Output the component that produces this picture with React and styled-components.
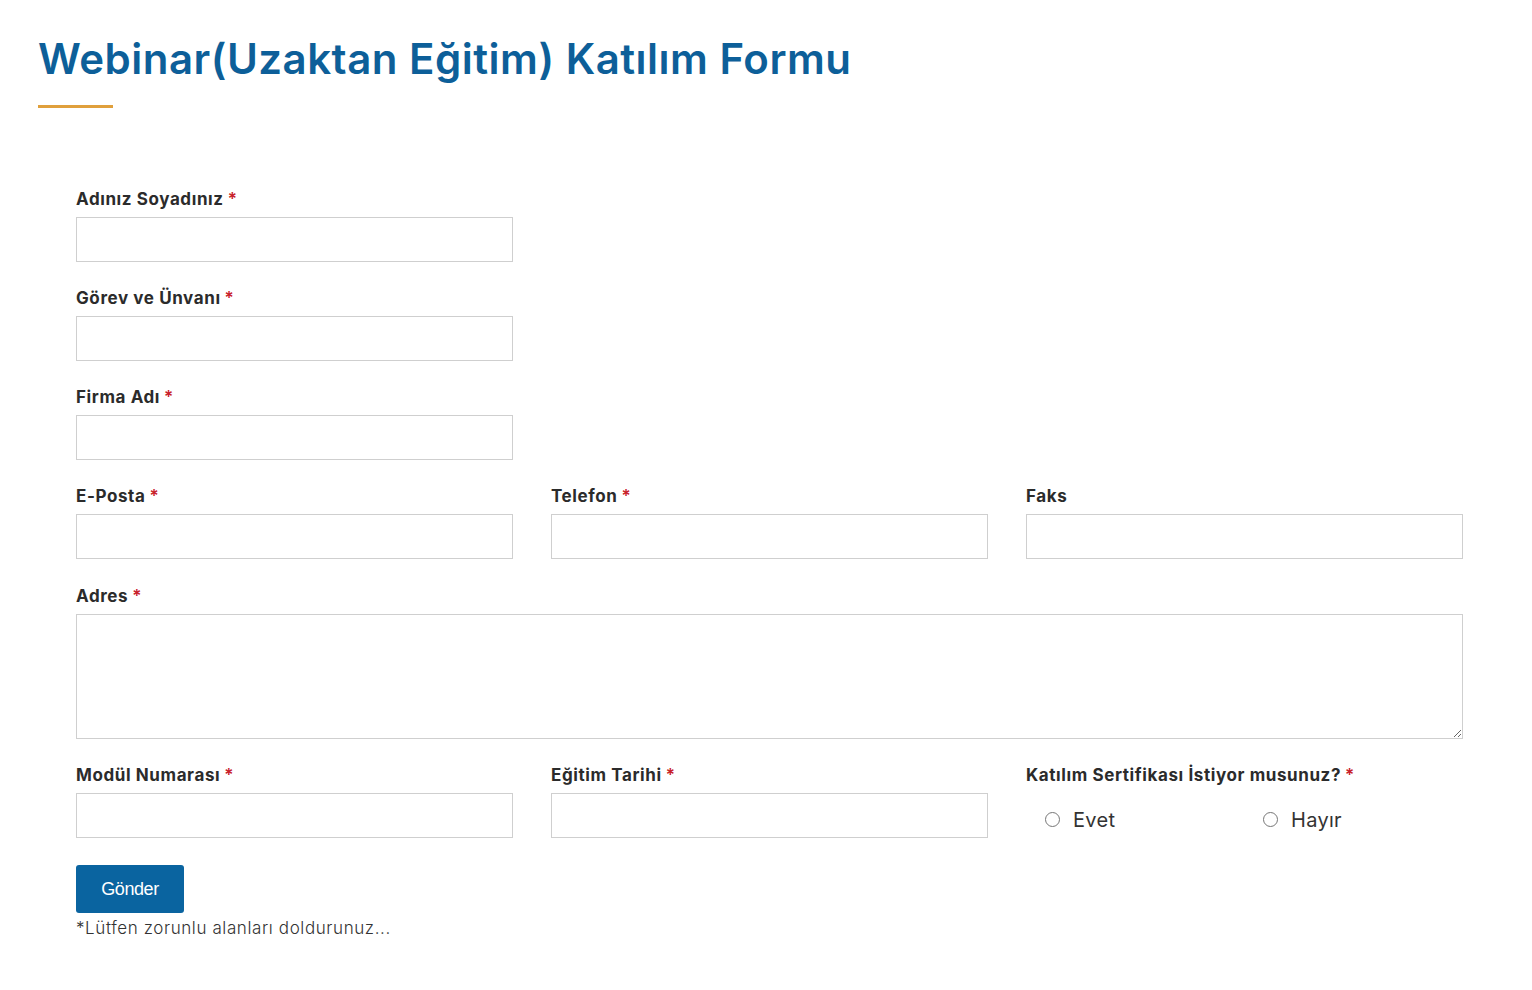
import React from "react";
import styled, { createGlobalStyle } from "styled-components";

const Global = createGlobalStyle`
  html, body { margin: 0; padding: 0; background: #fff; }
  body { font-family: "Inter", "Open Sans", sans-serif; color: #333; }
  * { box-sizing: border-box; }
`;

const Page = styled.div`
  padding: 28px 38px 40px 38px;
`;

const Title = styled.h1`
  margin: 0;
  font-family: "Inter", sans-serif;
  font-weight: 600;
  font-size: 42px;
  line-height: 62px;
  color: #0d5f99;
  letter-spacing: 0.5px;
`;

const Underline = styled.div`
  width: 75px;
  height: 3px;
  background: #e0a03c;
  margin-top: 15px;
`;

const Form = styled.form`
  margin: 78px 0 0 38px;
  width: 1387px;
  display: flex;
  flex-direction: column;
  gap: 23px;
`;

const Row = styled.div`
  display: grid;
  grid-template-columns: repeat(3, 437px);
  column-gap: 38px;
  margin-top: ${(p) => p.$extra || 0}px;
`;

const Field = styled.div`
  display: flex;
  flex-direction: column;
  gap: 5px;
  grid-column: ${(p) => (p.$full ? "1 / -1" : "auto")};
`;

const Label = styled.label`
  font-family: "Inter", sans-serif;
  font-weight: 700;
  font-size: 17px;
  line-height: 26px;
  letter-spacing: 0.6px;
  color: #2b2b2b;
  display: block;
`;

const Req = styled.span`
  color: #c8202a;
  margin-left: 4px;
  font-weight: 600;
`;

const Input = styled.input`
  width: 100%;
  height: 45px;
  border: 1px solid #cfcfcf;
  border-radius: 0;
  background: #fff;
  padding: 0 10px;
  font-size: 16px;
  outline: none;
`;

const TextArea = styled.textarea`
  width: 100%;
  height: 125px;
  border: 1px solid #cfcfcf;
  border-radius: 0;
  padding: 10px;
  font-size: 16px;
  outline: none;
  resize: vertical;
  display: block;
`;

const RadioGroup = styled.div`
  display: grid;
  grid-template-columns: 218px 200px;
  padding: 8px 0 0 19px;
  height: 45px;
  align-items: center;
`;

const RadioOption = styled.label`
  display: flex;
  align-items: center;
  gap: 13px;
  font-family: "Inter", sans-serif;
  font-size: 20px;
  letter-spacing: 0.3px;
  color: #333;
`;

const Radio = styled.input`
  width: 15px;
  height: 15px;
  margin: 0;
  accent-color: #0a64a0;
`;

const Bottom = styled.div`
  display: flex;
  flex-direction: column;
  align-items: flex-start;
  margin-top: 4px;
`;

const Button = styled.button`
  width: 108px;
  height: 48px;
  border: none;
  border-radius: 3px;
  background: #0a64a0;
  color: #fff;
  font-family: "Liberation Sans", Arial, sans-serif;
  font-size: 18px;
  letter-spacing: -0.4px;
  cursor: pointer;
`;

const Note = styled.p`
  margin: 3px 0 0 0;
  font-family: "Inter", sans-serif;
  font-weight: 300;
  font-size: 17px;
  line-height: 24px;
  letter-spacing: 0.6px;
  color: #333;
`;

const fields1 = [
  { label: "Adınız Soyadınız", req: true },
  { label: "Görev ve Ünvanı", req: true },
  { label: "Firma Adı", req: true },
];

function F({ label, req, children, full }) {
  return (
    <Field $full={full}>
      <Label>
        {label}
        {req && <Req>*</Req>}
      </Label>
      {children || <Input type="text" />}
    </Field>
  );
}

export default function App() {
  return (
    <Page>
      <Global />
      <Title>Webinar(Uzaktan Eğitim) Katılım Formu</Title>
      <Underline />
      <Form onSubmit={(e) => e.preventDefault()}>
        {fields1.map((f) => (
          <Row key={f.label}>
            <F label={f.label} req={f.req} />
          </Row>
        ))}
        <Row>
          <F label="E-Posta" req />
          <F label="Telefon" req />
          <F label="Faks" />
        </Row>
        <Row $extra={1}>
          <F label="Adres" req full>
            <TextArea />
          </F>
        </Row>
        <Row>
          <F label="Modül Numarası" req />
          <F label="Eğitim Tarihi" req />
          <F label="Katılım Sertifikası İstiyor musunuz?" req>
            <RadioGroup>
              <RadioOption>
                <Radio type="radio" name="cert" />
                Evet
              </RadioOption>
              <RadioOption>
                <Radio type="radio" name="cert" />
                Hayır
              </RadioOption>
            </RadioGroup>
          </F>
        </Row>
        <Bottom>
          <Button type="submit">Gönder</Button>
          <Note>*Lütfen zorunlu alanları doldurunuz...</Note>
        </Bottom>
      </Form>
    </Page>
  );
}
